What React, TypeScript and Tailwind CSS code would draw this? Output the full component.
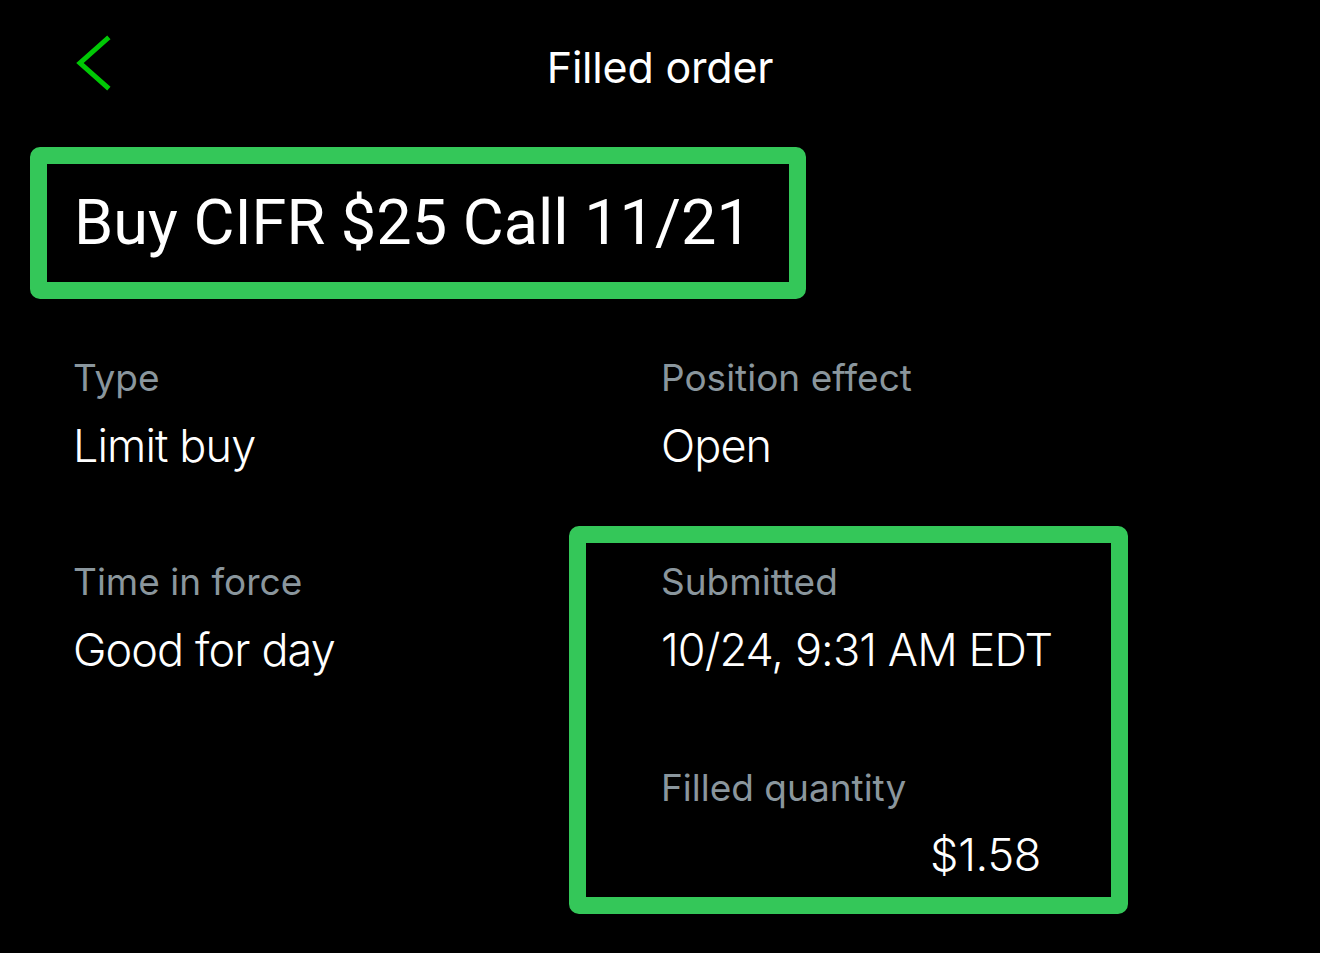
import React from "react";

const inter = { fontFamily: "Inter, 'Noto Sans', sans-serif" };

function Field({ label, value }: { label: string; value: string }) {
    return (
        <div className="flex flex-col">
            <div className="text-[37px] leading-[44px] text-[#8a969d]">{label}</div>
            <div className="mt-[18px] text-[45px] leading-[56px] font-light tracking-[-0.9px] text-white">{value}</div>
        </div>
    );
}

export default function App() {
    return (
        <div className="w-[1320px] h-[953px] bg-black overflow-hidden" style={inter}>
            {/* header */}
            <div className="h-[147px] grid grid-cols-[1fr_auto_1fr] items-start pt-[35px]">
                <div className="pl-[74px]">
                    <svg width="40" height="56" viewBox="0 0 40 56" fill="none">
                        <polyline points="33,4 6,28 33,52" stroke="#00c805" strokeWidth="5" strokeLinecap="square" strokeLinejoin="miter" />
                    </svg>
                </div>
                <div className="mt-[7px] text-[43px] leading-[50px] text-white tracking-[-0.2px]">Filled order</div>
                <div />
            </div>

            {/* title (highlighted) */}
            <div className="pl-[30px]">
                <div className="w-[776px] h-[152px] flex items-center border-[17px] border-[#34c759] rounded-[10px] pl-[27px]">
                    <h1 className="text-[63px] leading-[63px] text-white font-['Roboto',sans-serif] -mt-[2px]">
                        Buy CIFR $25 Call 11/21
                    </h1>
                </div>
            </div>

            {/* details */}
            <div className="grid grid-cols-[496px_559px] gap-y-[52px] pl-[73px] mt-[57px]">
                <div>
                    <Field label="Type" value="Limit buy" />
                </div>
                <div className="pl-[92px]">
                    <Field label="Position effect" value="Open" />
                </div>

                <div className="pt-[34px]">
                    <Field label="Time in force" value="Good for day" />
                </div>
                <div className="border-[17px] border-[#34c759] rounded-[10px] pl-[75px] pt-[17px] pb-[16px]">
                    <Field label="Submitted" value="10/24, 9:31 AM EDT" />
                    <div className="mt-[88px] text-[37px] leading-[44px] text-[#8a969d]">Filled quantity</div>
                    <div className="mt-[18px] pr-[70px] text-right text-[45px] leading-[53px] font-light tracking-[-0.3px] text-white">$1.58</div>
                </div>
            </div>
        </div>
    );
}
